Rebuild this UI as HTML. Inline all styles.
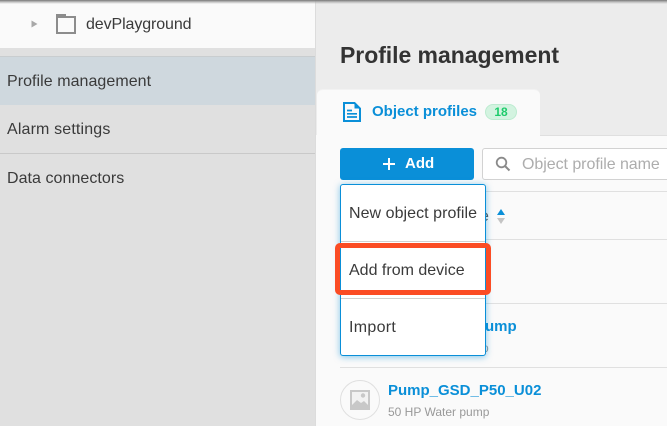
<!DOCTYPE html>
<html><head><meta charset="utf-8"><style>
*{box-sizing:border-box}
html,body{margin:0;padding:0;width:667px;height:426px;overflow:hidden;background:#ececec}
body{position:relative;font-family:"Liberation Sans",sans-serif;color:#3a3a3a}
.a{position:absolute;white-space:nowrap}
.l{position:absolute;height:1px}
</style></head><body>
<div class="a" style="left:0;top:0;width:316px;height:426px;background:#e0e0e0"></div>
<div class="a" style="left:0;top:0;width:315px;height:48px;background:#fafafa"></div>
<div class="a" style="left:315px;top:0;width:1px;height:426px;background:#dcdcdc"></div>
<svg class="a" style="left:31px;top:20px" width="7" height="8"><path d="M0.5 0.5L6.5 4L0.5 7.5Z" fill="#a8a8a8"/></svg>
<svg class="a" style="left:56px;top:14px" width="20" height="20"><path d="M0 0H10V2H20V20H0Z" fill="#8c8c8c"/><rect x="2" y="4" width="16" height="14" fill="#fafafa"/></svg>
<div class="a" style="left:86px;top:16px;font-size:16px;line-height:18px;letter-spacing:-.1px">devPlayground</div>
<div class="l" style="left:0;top:56px;width:315px;background:#c9cdcf"></div>
<div class="a" style="left:0;top:57px;width:315px;height:48px;background:#cfd8de"></div>
<div class="a" style="left:7px;top:73px;font-size:16px;line-height:18px;letter-spacing:.05px">Profile management</div>
<div class="a" style="left:7px;top:121px;font-size:16px;line-height:18px;letter-spacing:.15px">Alarm settings</div>
<div class="l" style="left:0;top:153px;width:315px;background:#c9c9c9"></div>
<div class="a" style="left:7px;top:170px;font-size:16px;line-height:18px;letter-spacing:.05px">Data connectors</div>

<div class="a" style="left:0;top:0;width:667px;height:4px;background:linear-gradient(#777,rgba(170,170,170,.7) 50%,rgba(220,220,220,0))"></div>

<div class="a" style="left:340px;top:41px;font-size:23px;line-height:28px;font-weight:700;color:#333;letter-spacing:-.05px">Profile management</div>

<div class="a" style="left:316px;top:135px;width:351px;height:291px;background:#fafafa"></div>
<div class="a" style="left:317px;top:89px;width:223px;height:47px;background:#fafafa;border-radius:6px 6px 0 0;border-top:1px solid #f2f2f2"></div>
<div class="l" style="left:540px;top:135px;width:127px;background:#dfdfdf"></div>
<svg class="a" style="left:343px;top:102px" width="18" height="20" viewBox="0 0 18 20"><path d="M1 1H11.500L17 6.500V19H1Z" fill="none" stroke="#0a8fd8" stroke-width="2"/><path d="M11.500 1V6.500H17Z" fill="#0a8fd8"/><path d="M4 8.500H9M4 11.800H14M4 15H14" stroke="#0a8fd8" stroke-width="1.700"/></svg>
<div class="a" style="left:372px;top:103px;font-size:15px;line-height:18px;font-weight:700;color:#0a8fd8">Object profiles</div>
<div class="a" style="left:485px;top:104px;width:32px;height:16px;border-radius:8px;background:#d3f3e0;border:1px solid #bcebd0;color:#1ecb6b;font-size:12px;font-weight:700;line-height:14px;text-align:center">18</div>

<div class="a" style="left:340px;top:148px;width:134px;height:32px;background:#0a8fd8;border-radius:3px"></div>
<svg class="a" style="left:382px;top:157px" width="14" height="14"><path d="M7 1V13M1 7H13" stroke="#fff" stroke-width="2"/></svg>
<div class="a" style="left:405px;top:155px;font-size:15px;line-height:18px;font-weight:700;color:#fff">Add</div>
<div class="a" style="left:482px;top:148px;width:200px;height:32px;background:#fff;border:1px solid #d2d2d2;border-radius:3px"></div>
<svg class="a" style="left:495px;top:156px" width="16" height="16"><circle cx="6.500" cy="6.500" r="4.800" fill="none" stroke="#8a8a8a" stroke-width="1.800"/><path d="M10 10L14.500 14.500" stroke="#8a8a8a" stroke-width="2"/></svg>
<div class="a" style="left:522px;top:156px;font-size:16px;line-height:18px;color:#adadad;letter-spacing:-.05px">Object profile name</div>

<div class="l" style="left:340px;top:191px;width:327px;background:#e0e0e0"></div>
<div class="a" style="left:480px;top:208px;font-size:16px;line-height:18px;color:#555">e</div>
<svg class="a" style="left:496px;top:208px" width="10" height="17"><path d="M1 7L5 1L9 7Z" fill="#0a8fd8"/><path d="M1 10H9L5 16Z" fill="#c4c4c4"/></svg>
<div class="l" style="left:340px;top:239px;width:327px;background:#e0e0e0"></div>
<div class="l" style="left:340px;top:303px;width:327px;background:#e0e0e0"></div>
<div class="a" style="left:485px;top:318px;font-size:15px;line-height:18px;font-weight:700;color:#0a8fd8">ump</div>
<div class="a" style="left:482px;top:341px;font-size:12px;line-height:14px;color:#999">p</div>
<div class="l" style="left:340px;top:367px;width:327px;background:#e0e0e0"></div>

<svg class="a" style="left:340px;top:380px" width="40" height="40"><circle cx="20" cy="20" r="19.500" fill="none" stroke="#e0e0e0"/><rect x="10" y="10" width="20" height="20" fill="#c8c8c8"/><rect x="12" y="12" width="16" height="16" fill="#f2f2f2"/><circle cx="23" cy="15.500" r="2.200" fill="#c8c8c8"/><path d="M12 25L17 20L21 23L24 21L28 25V28H12Z" fill="#c8c8c8"/></svg>
<div class="a" style="left:388px;top:382px;font-size:15px;line-height:18px;font-weight:700;color:#0a8fd8">Pump_GSD_P50_U02</div>
<div class="a" style="left:388px;top:405px;font-size:12px;line-height:14px;color:#999">50 HP Water pump</div>

<div class="a" style="left:340px;top:184px;width:146px;height:172px;background:#fff;border:1px solid #0a8fd8;border-radius:3px;box-shadow:0 1px 7px rgba(10,143,216,.5)"></div>
<div class="a" style="left:349px;top:205px;font-size:16px;line-height:18px;letter-spacing:.05px">New object profile</div>
<div class="l" style="left:341px;top:241px;width:144px;background:#d0d0d0"></div>
<div class="l" style="left:341px;top:298px;width:144px;background:#d0d0d0"></div>
<div class="a" style="left:349px;top:262px;font-size:16px;line-height:18px">Add from device</div>
<div class="a" style="left:349px;top:319px;font-size:16px;line-height:18px;letter-spacing:.3px">Import</div>
<div class="a" style="left:335px;top:243px;width:156px;height:52px;border:5px solid #fb4c24;border-radius:5px"></div>
</body></html>
